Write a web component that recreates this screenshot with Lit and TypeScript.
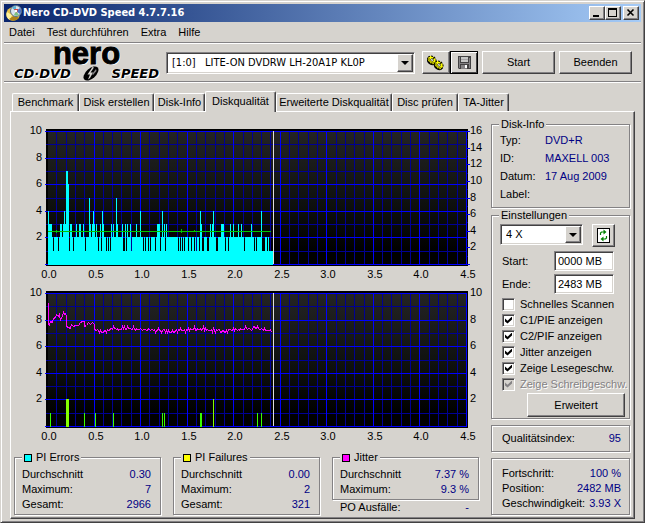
import { LitElement, html, svg, css } from "lit";
import { customElement, property, state } from "lit/decorators.js";
import { classMap } from "lit/directives/class-map.js";

const controls = css`
  * { box-sizing: border-box; }
  button, input, select {
    font: inherit;
    color: inherit;
    margin: 0;
    border-radius: 0;
    outline: none;
  }
  .btn {
    display: inline-flex;
    align-items: center;
    justify-content: center;
    padding: 0;
    background: #d6d3ce;
    border: 1px solid;
    border-color: #fff #424142 #424142 #fff;
    box-shadow: inset -1px -1px 0 #848284;
  }
  .combo { position: relative; display: block; }
  .combo select {
    display: block;
    width: 100%;
    height: 100%;
    appearance: none;
    background: #fff;
    border: 1px solid;
    border-color: #848284 #fff #fff #848284;
    box-shadow: inset 1px 1px 0 #424142, inset -1px -1px 0 #d6d3ce;
    padding: 0 20px 0 5px;
  }
  .combo .arrow {
    position: absolute;
    top: 2px;
    right: 2px;
    bottom: 2px;
    width: 16px;
    pointer-events: none;
    display: flex;
    align-items: center;
    justify-content: center;
    background: #d6d3ce;
    border: 1px solid;
    border-color: #fff #424142 #424142 #fff;
    box-shadow: inset -1px -1px 0 #848284;
  }
  .arrow::before {
    content: "";
    border: 4px solid transparent;
    border-bottom-width: 0;
    border-top-color: #000;
  }
  fieldset, .box {
    margin: 0;
    padding: 0;
    min-width: 0;
    border: 1px solid #848284;
    box-shadow: 1px 1px 0 #fff, inset 1px 1px 0 #fff;
  }
  legend {
    display: flex;
    align-items: center;
    gap: 4px;
    height: 13px;
    margin-left: 7px;
    padding: 0 2px;
    background: #d6d3ce;
    line-height: 13px;
  }
  dl { margin: 0; }
  dl > div { display: flex; justify-content: space-between; line-height: 15px; }
  dd { margin: 0; color: #000084; }
`;

/* PI error scan: every column is 2 high, except the columns listed under their height. */
const SCAN_WIDTH = 225;
const PI_ERRORS: Record<number, number[]> = {
  1: [
    5, 10, 21, 25, 37, 50, 53, 58, 60, 62, 75, 76, 78, 83, 95, 97, 100, 102, 107, 112, 117,
    130, 132, 134, 136, 140, 143, 146, 148, 151, 154, 155, 159, 160, 168, 169, 177, 180,
    196, 206, 208, 214, 215, 216, 219, 221, 222, 223, 224,
  ],
  3: [
    1, 2, 3, 12, 13, 15, 17, 22, 23, 28, 31, 32, 35, 42, 44, 46, 48, 52, 55, 63, 65, 69, 74,
    77, 79, 82, 88, 109, 110, 111, 116, 118, 153, 162, 164, 173, 174, 175, 182, 185, 190,
    193, 203,
  ],
  4: [0, 16, 45, 54, 92, 114, 152, 165, 213],
  5: [41, 68],
  6: [20],
  7: [18, 19],
};

/* Columns of the PI failure scan: [column, height]. */
const PI_FAILURES: [number, number][] = [
  [2, 1], [18, 2], [19, 2], [20, 2], [36, 1], [47, 1], [65, 1], [114, 1], [116, 1],
  [152, 1], [153, 1], [165, 2], [209, 1], [213, 1],
];

const JITTER_START: [number, number][] = [
  [0, 9.3], [0, 7.7], [1, 7.6], [2, 7.9], [4, 7.8], [5, 8.1], [7, 8.2], [8, 8.4], [10, 8.3],
  [11, 8.4], [12, 8.0], [13, 8.2], [14, 8.3], [15, 8.6], [16, 8.4], [17, 8.5], [18, 8.3], [18, 7.5],
  [22, 7.4], [23, 7.7], [25, 7.5], [27, 7.6], [30, 7.6], [32, 7.8], [34, 7.9], [36, 7.9],
  [36, 7.5], [38, 7.6], [40, 7.8], [42, 7.7], [44, 7.8], [46, 7.7], [46, 7.4], [47, 7.2],
];
/* Tenths above 7.0, one digit per column after the start. */
const JITTER_TAIL =
  "2321211122132244354434233354533544433532433343233322432332312242212331212111211" +
  "2313242223132424333522433423524232223142132331122112133322424323243333543443" +
  "2355445433432422222311221211223211422332312223422422313322313";

const X0 = 36;
const Y0 = 142;
const px = (v: number) => Math.round(X0 + v * 93.1);
const py = (v: number, max = 10) => Math.round(Y0 - (v * 133) / max);
const steps = (n: number) => Array.from({ length: n }, (_, i) => i);

@customElement("scan-chart")
export class ScanChart extends LitElement {
  @property() kind: "errors" | "jitter" = "errors";

  static styles = css`
    :host { display: block; }
    svg { display: block; width: 100%; height: auto; shape-rendering: crispEdges; }
    text { font: 11px "Liberation Sans", Arial, sans-serif; fill: #000; }
    .minor { fill: #000094; }
    .major { fill: #0000ff; }
    .cyan { fill: #00ffff; }
    .speed { fill: #00c600; }
    .low { fill: #39ff00; }
    .high { fill: #84ff00; }
    .cursor { fill: #dedede; }
    .jitter { fill: none; stroke: #ff00ff; stroke-width: 1; }
    .end { text-anchor: end; }
    .mid { text-anchor: middle; }
  `;

  private grid() {
    return svg`
      ${steps(46).map((i) => (i % 5 ? svg`<rect class="minor" x=${px(i / 10)} y="9" width="1" height="134"/>` : null))}
      ${steps(11).map((i) => (i % 2 ? svg`<rect class="minor" x="35" y=${py(i)} width="420" height="1"/>` : null))}
      ${steps(10).map((i) => (i ? svg`<rect class="major" x=${px(i / 2)} y="9" width="1" height="134"/>` : null))}
      ${steps(6).map((i) => svg`<rect class="major" x="34" y=${py(i * 2)} width="422" height="1"/>`)}
    `;
  }

  private errors() {
    const heights = new Array<number>(SCAN_WIDTH).fill(2);
    for (const [height, columns] of Object.entries(PI_ERRORS)) {
      for (const c of columns) heights[c] = +height;
    }
    return svg`
      ${heights.map((h, i) => svg`<rect class="cyan" x=${37 + i} y=${py(h)} width="1" height=${143 - py(h)}/>`)}
      <rect class="speed" x="37" y="109" width="223" height="1"/>
      <rect class="speed" x="45" y="108" width="1" height="3"/>
      <rect class="speed" x="170" y="107" width="1" height="4"/>
      <rect class="speed" x="183" y="108" width="1" height="2"/>
      ${steps(17).map((i) => svg`<rect class=${i % 2 ? "minor" : "major"} x="456" y=${py(i, 16)} width=${i % 2 ? 1 : 3} height="1"/>`)}
    `;
  }

  private jitter() {
    const tail = [...JITTER_TAIL].slice(0, 176).map((c, i) => [48 + i, 7 + +c / 10] as [number, number]);
    const points = [...JITTER_START, ...tail]
      .map(([x, v]) => `${37.5 + x},${Math.round(Y0 - v * 13.3) + 0.5}`)
      .join(" ");
    return svg`
      <polyline class="jitter" points=${points}/>
      ${PI_FAILURES.map(([x, v]) => svg`<rect class=${v > 1 ? "high" : "low"} x=${37 + x} y=${py(v)} width="1" height=${143 - py(v)}/>`)}
    `;
  }

  render() {
    const errors = this.kind === "errors";
    const max = errors ? 16 : 10;
    return html`
      <svg viewBox="0 0 480 162" role="img" aria-label=${errors ? "PI Errors" : "Jitter"}>
        <defs>
          <linearGradient id="shade" x1="0" y1="0" x2="0" y2="1">
            <stop offset="0" stop-color="#242424"/>
            <stop offset="0.5" stop-color="#101210"/>
            <stop offset="0.9" stop-color="#000"/>
          </linearGradient>
        </defs>
        <rect x="35" y="7" width="422" height="137"/>
        <rect x="37" y="9" width="418" height="134" fill="url(#shade)"/>
        ${this.grid()}
        ${errors ? this.errors() : this.jitter()}
        <rect class="cursor" x="262" y="9" width="1" height="133"/>
        ${steps(5).map((i) => svg`<text class="end" x="31" y=${py(i * 2 + 2) + 3}>${i * 2 + 2}</text>`)}
        ${steps(max / 2).map((i) => svg`<text x="459" y=${py(i * 2 + 2, max) + 3}>${i * 2 + 2}</text>`)}
        ${steps(10).map((i) => svg`<text class="mid" x=${px(i / 2) + 2} y="156">${(i / 2).toFixed(1)}</text>`)}
      </svg>
    `;
  }
}

@customElement("stat-group")
export class StatGroup extends LitElement {
  @property() label = "";
  @property() color = "";
  @property({ attribute: false }) rows: string[][] = [];

  static styles = [
    controls,
    css`
      :host { display: block; }
      .swatch { width: 8px; height: 8px; border: 1px solid #000; }
      dl { padding: 3px 9px 2px 7px; }
    `,
  ];

  render() {
    return html`
      <fieldset>
        <legend><span class="swatch" style="background:${this.color}"></span>${this.label}</legend>
        <dl>${this.rows.map(([k, v]) => html`<div><dt>${k}</dt><dd>${v}</dd></div>`)}</dl>
      </fieldset>
    `;
  }
}

@customElement("settings-panel")
export class SettingsPanel extends LitElement {
  static styles = [
    controls,
    css`
      :host { display: block; }
      .body { padding: 2px 4px 1px 8px; }
      .row { display: flex; gap: 9px; }
      .combo { width: 83px; height: 21px; }
      .refresh { width: 23px; height: 23px; }
      .fields {
        display: grid;
        grid-template-columns: 52px 60px;
        row-gap: 3px;
        align-items: center;
        padding: 4px 0 2px 2px;
      }
      .fields input {
        width: 100%;
        height: 20px;
        padding: 0 3px;
        background: #fff;
        border: 1px solid;
        border-color: #848284 #fff #fff #848284;
        box-shadow: inset 1px 1px 0 #424142, inset -1px -1px 0 #d6d3ce;
      }
      .check {
        display: flex;
        align-items: center;
        gap: 5px;
        height: 16px;
        padding-left: 2px;
        white-space: nowrap;
      }
      .check input {
        appearance: none;
        width: 13px;
        height: 13px;
        flex: none;
        background: #fff;
        border: 1px solid;
        border-color: #848284 #fff #fff #848284;
        box-shadow: inset 1px 1px 0 #424142, inset -1px -1px 0 #d6d3ce;
      }
      .check input:checked::before {
        content: "";
        display: block;
        width: 7px;
        height: 7px;
        margin: 2px;
        background: #000;
        clip-path: polygon(0 28%, 36% 62%, 100% 0, 100% 42%, 36% 100%, 0 72%);
      }
      .check input:disabled { background: #d6d3ce; }
      .check input:disabled::before { background: #848284; }
      .check.off { color: #848284; text-shadow: 1px 1px 0 #fff; }
      .more { display: flex; width: 98px; height: 24px; margin: 1px 0 0 auto; }
    `,
  ];

  private checks: [string, boolean, boolean][] = [
    ["Schnelles Scannen", false, false],
    ["C1/PIE anzeigen", true, false],
    ["C2/PIF anzeigen", true, false],
    ["Jitter anzeigen", true, false],
    ["Zeige Lesegeschw.", true, false],
    ["Zeige Schreibgeschw.", true, true],
  ];

  render() {
    return html`
      <fieldset>
        <legend>Einstellungen</legend>
        <div class="body">
          <div class="row">
            <label class="combo">
              <select aria-label="Geschwindigkeit"><option>4 X</option></select>
              <span class="arrow"></span>
            </label>
            <button class="btn refresh" aria-label="Aktualisieren">
              <svg width="13" height="15" viewBox="0 0 13 15">
                <rect x="0.5" y="0.5" width="12" height="14" fill="#fff" stroke="#000"/>
                <path d="M3.500 7V5l1-1H7" fill="none" stroke="#008200" stroke-width="1.200"/>
                <path d="M6.500 1.500L9.500 4L6.500 6.500Z" fill="#008200"/>
                <path d="M9.500 8V10l-1 1H6" fill="none" stroke="#008200" stroke-width="1.200"/>
                <path d="M6.500 8.500L3.500 11L6.500 13.500Z" fill="#008200"/>
              </svg>
            </button>
          </div>
          <div class="fields">
            <label for="from">Start:</label><input id="from" value="0000 MB" />
            <label for="to">Ende:</label><input id="to" value="2483 MB" />
          </div>
          ${this.checks.map(
            ([text, on, off]) => html`
              <label class=${classMap({ check: true, off })}>
                <input type="checkbox" .checked=${on} ?disabled=${off} />${text}
              </label>
            `
          )}
          <button class="btn more">Erweitert</button>
        </div>
      </fieldset>
    `;
  }
}

@customElement("app-root")
export class AppRoot extends LitElement {
  @state() private tab = "Diskqualität";

  private tabs = [
    "Benchmark", "Disk erstellen", "Disk-Info", "Diskqualität",
    "Erweiterte Diskqualität", "Disc prüfen", "TA-Jitter",
  ];

  static styles = [
    controls,
    css`
      :host {
        display: block;
        font: 11px/13px "Liberation Sans", Arial, sans-serif;
        color: #000;
      }
      .window {
        display: flex;
        flex-direction: column;
        min-height: 100vh;
        padding: 3px;
        background: #d6d3ce;
        border: 1px solid;
        border-color: #d6d3ce #424142 #424142 #d6d3ce;
        box-shadow: inset 1px 1px 0 #fff, inset -1px -1px 0 #848284;
      }
      .title {
        display: flex;
        align-items: center;
        height: 18px;
        padding: 0 2px;
        background: linear-gradient(90deg, #08246b, #a5cbf7);
        color: #fff;
      }
      .title h1 {
        flex: 1;
        margin: 0 0 0 1px;
        font: bold 11px/18px "DejaVu Sans Condensed", "DejaVu Sans", sans-serif;
      }
      .title .btn { width: 16px; height: 14px; }
      .title .close { margin-left: 2px; }
      .menu { display: flex; gap: 12px; height: 20px; padding: 0 5px; }
      .menu button { padding: 0; border: 0; background: none; }
      .rule { height: 2px; margin: 0; border: 0; background: linear-gradient(#848284 50%, #fff 50%); }
      .tools { display: flex; align-items: center; height: 37px; padding: 0 9px 0 10px; }
      .logo { width: 145px; margin-right: 7px; text-shadow: -1px 0 0 #fff, 1px 1px 0 #fff; }
      .nero {
        height: 22px;
        font: bold 31px/19px "Liberation Sans", Arial, sans-serif;
        text-align: center;
        -webkit-text-stroke: 1px #000;
      }
      .sub {
        display: flex;
        align-items: center;
        justify-content: space-between;
        height: 15px;
        font: oblique bold 13px/15px "DejaVu Sans", sans-serif;
      }
      .tools .combo {
        flex: 1;
        height: 22px;
        margin-right: 7px;
        font: 11px/13px "DejaVu Sans Condensed", "DejaVu Sans", sans-serif;
      }
      .tools .icon { width: 28px; height: 23px; }
      .tools .save { border-color: #000; box-shadow: inset 1px 1px 0 #fff, inset -1px -1px 0 #424142; margin-right: 4px; }
      .tools .wide { width: 73px; height: 23px; }
      .tools .wide + .wide { margin-left: 4px; }
      .tabs {
        display: grid;
        grid-template-columns: 67px 75px 51px 71px 116px 66px 51px;
        align-items: end;
        height: 28px;
        padding: 0 8px;
      }
      .tab {
        height: 18px;
        padding: 0;
        background: #d6d3ce;
        border: 1px solid;
        border-color: #fff #424142 transparent #fff;
        border-bottom: 0;
        border-radius: 2px 2px 0 0;
        box-shadow: inset -1px 0 0 #848284;
        white-space: nowrap;
      }
      .tab.on { height: 21px; margin-bottom: -1px; padding-bottom: 2px; position: relative; }
      .panel {
        flex: 1;
        display: grid;
        grid-template-columns: minmax(0, 1fr) 139px;
        align-items: start;
        margin: 0 6px;
        padding: 0 4px 1px 0;
        border: 1px solid;
        border-color: #fff #424142 #424142 #fff;
        box-shadow: inset -1px -1px 0 #848284;
      }
      .charts { padding-top: 10px; }
      .stats {
        display: grid;
        grid-template-columns: repeat(3, minmax(0, 1fr));
        align-items: start;
        gap: 12px;
        padding: 5px 12px 0 3px;
      }
      .po { padding: 0 10px 0 8px; }
      .side { padding-top: 6px; }
      .info { padding: 0 8px 4px; }
      .info > div { display: grid; grid-template-columns: 45px 1fr; line-height: 18px; }
      settings-panel { margin-top: 1px; }
      .box { margin-top: 6px; padding: 0 8px 0 10px; }
      .quality > div { line-height: 25px; }
      .progress { padding-top: 7px; padding-bottom: 3px; }
    `,
  ];

  private discIcon() {
    return html`<svg width="16" height="16" viewBox="0 0 16 16" aria-hidden="true">
      <circle cx="7" cy="9" r="6.800" fill="#e7c34a"/>
      <path d="M1 7a6 6 0 0 0 3 8l2-5z" fill="#fff39c"/>
      <path d="M3 14a7 7 0 0 0 10 -1l-4-3z" fill="#ad8218"/>
      <circle cx="10" cy="6" r="5.500" fill="#d6e3ef" stroke="#5a7184"/>
      <path d="M10 6L6 3a5 5 0 0 1 4-2z" fill="#5ab2d6"/>
      <path d="M10 6L14 3a5 5 0 0 1 0 6z" fill="#4a71c6"/>
      <path d="M10 6L8 10a5 5 0 0 0 5 0z" fill="#7bc384"/>
      <path d="M8 4l4 0l-1 4z" fill="#d63029"/>
      <circle cx="10" cy="6" r="1.200" fill="#fff"/>
    </svg>`;
  }

  private cog(x: number, y: number) {
    return svg`<g transform="translate(${x} ${y}) rotate(40)">
      <ellipse rx="5" ry="4" cy="1" fill="#000"/>
      <ellipse rx="4.500" ry="3.500" fill="#ffff00" stroke="#000" stroke-width="1" stroke-dasharray="2 1"/>
      <path d="M-3 0A3 2.500 0 0 0 3 0" fill="none" stroke="#9c9a00"/>
      <path d="M0 -4V-1" stroke="#000"/>
      <ellipse rx="1.500" ry="1.200" fill="#fff" stroke="#000" stroke-width="0.600"/>
    </g>`;
  }

  render() {
    return html`
      <div class="window">
        <header class="title">
          ${this.discIcon()}
          <h1>Nero CD-DVD Speed 4.7.7.16</h1>
          <button class="btn" aria-label="Minimieren">
            <svg width="12" height="10" viewBox="0 0 12 10"><path d="M2 7h6v2H2z"/></svg>
          </button>
          <button class="btn" aria-label="Maximieren">
            <svg width="12" height="10" viewBox="0 0 12 10"><path fill-rule="evenodd" d="M1 0h9v9H1zM2 2v6h7V2z"/></svg>
          </button>
          <button class="btn close" aria-label="Schließen">
            <svg width="12" height="10" viewBox="0 0 12 10"><path d="M2.500 1.500l6 6M8.500 1.500l-6 6" stroke="#000" stroke-width="1.600"/></svg>
          </button>
        </header>
        <nav class="menu">
          ${["Datei", "Test durchführen", "Extra", "Hilfe"].map((m) => html`<button>${m}</button>`)}
        </nav>
        <hr class="rule" />
        <div class="tools">
          <div class="logo">
            <div class="nero">nero</div>
            <div class="sub">
              <span>CD·DVD</span>
              <svg width="20" height="15" viewBox="0 0 18 15" aria-hidden="true">
                <ellipse cx="9" cy="7.500" rx="9" ry="5" transform="rotate(-42 9 7.500)" fill="#000"/>
                <path d="M10.500 1L5.500 8.500H8L6 13.500L8 12L11 6.500H8.500L12 1.500Z" fill="#d6d3ce"/>
                <path d="M14 3L10 8L11 9L14.500 5Z" fill="#848284"/>
              </svg>
              <span>SPEED</span>
            </div>
          </div>
          <label class="combo">
            <select aria-label="Laufwerk"><option>[1:0]\u00a0\u00a0 LITE-ON DVDRW LH-20A1P KL0P</option></select>
            <span class="arrow"></span>
          </label>
          <button class="btn icon" aria-label="Optionen">
            <svg width="18" height="16" viewBox="0 0 18 16">${this.cog(5, 5)}${this.cog(12, 10)}</svg>
          </button>
          <button class="btn icon save" aria-label="Speichern">
            <svg width="13" height="13" viewBox="0 0 13 13">
              <path d="M0 0h13v13H1L0 12z" fill="#424142"/>
              <path d="M1 1h1v11H1zM11 2h1v10h-1z" fill="#848284"/>
              <path d="M3 1h7v5H3z" fill="#c6c7c6"/>
              <path d="M3 3h7v1H3z" fill="#a5a2a5"/>
              <path d="M2 7h9v1H2z" fill="#848284"/>
              <path d="M3 9h6v4H3z" fill="#848284"/>
              <path d="M7 9h2v3H7z" fill="#fff"/>
            </svg>
          </button>
          <button class="btn wide">Start</button>
          <button class="btn wide">Beenden</button>
        </div>
        <hr class="rule" />
        <div class="tabs" role="tablist">
          ${this.tabs.map(
            (t) => html`<button role="tab" aria-selected=${t === this.tab}
              class=${classMap({ tab: true, on: t === this.tab })}
              @click=${() => (this.tab = t)}>${t}</button>`
          )}
        </div>
        <main class="panel">
          <section class="charts">
            <scan-chart kind="errors"></scan-chart>
            <scan-chart kind="jitter"></scan-chart>
            <div class="stats">
              <stat-group label="PI Errors" color="#00ffff"
                .rows=${[["Durchschnitt", "0.30"], ["Maximum:", "7"], ["Gesamt:", "2966"]]}></stat-group>
              <stat-group label="PI Failures" color="#ffff00"
                .rows=${[["Durchschnitt", "0.00"], ["Maximum:", "2"], ["Gesamt:", "321"]]}></stat-group>
              <div>
                <stat-group label="Jitter" color="#ff00ff"
                  .rows=${[["Durchschnitt", "7.37 %"], ["Maximum:", "9.3 %"]]}></stat-group>
                <dl class="po"><div><dt>PO Ausfälle:</dt><dd>-</dd></div></dl>
              </div>
            </div>
          </section>
          <aside class="side">
            <fieldset>
              <legend>Disk-Info</legend>
              <dl class="info">
                <div><dt>Typ:</dt><dd>DVD+R</dd></div>
                <div><dt>ID:</dt><dd>MAXELL 003</dd></div>
                <div><dt>Datum:</dt><dd>17 Aug 2009</dd></div>
                <div><dt>Label:</dt><dd></dd></div>
              </dl>
            </fieldset>
            <settings-panel></settings-panel>
            <dl class="box quality"><div><dt>Qualitätsindex:</dt><dd>95</dd></div></dl>
            <dl class="box progress">
              <div><dt>Fortschritt:</dt><dd>100 %</dd></div>
              <div><dt>Position:</dt><dd>2482 MB</dd></div>
              <div><dt>Geschwindigkeit:</dt><dd>3.93 X</dd></div>
            </dl>
          </aside>
        </main>
      </div>
    `;
  }
}
